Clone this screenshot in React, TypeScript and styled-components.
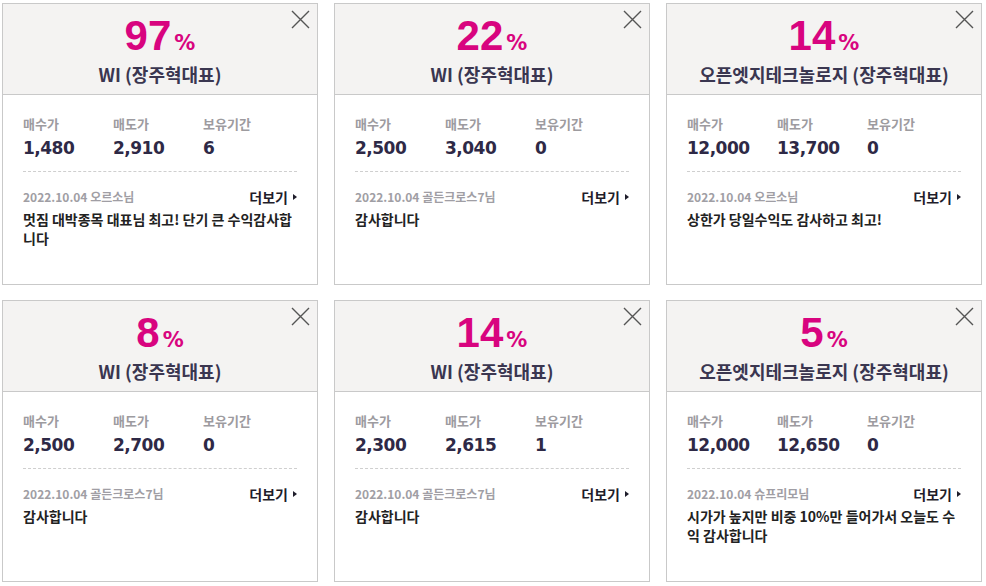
import styled, { createGlobalStyle } from 'styled-components';

const GlobalStyle = createGlobalStyle`
    body {
        margin: 0;
        background: #fff;
        font-family: "Noto Sans CJK KR", "Noto Sans", sans-serif;
    }
`;

const Grid = styled.div`
    display: grid;
    grid-template-columns: repeat(3, 316px);
    column-gap: 16px;
    row-gap: 15px;
    padding: 3px 0 0 2px;
`;

const Card = styled.div`
    position: relative;
    box-sizing: border-box;
    height: 282px;
    border: 1px solid #c9c9c9;
    background: #fff;
`;

const Head = styled.div`
    background: #f4f3f2;
    border-bottom: 1px solid #c9c9c9;
    padding: 11px 0 10px;
    text-align: center;
`;

const Rate = styled.div`
    line-height: 42px;
    height: 42px;
    color: #d8047f;
    font-weight: bold;
`;

const RateNum = styled.span`
    font-family: "Liberation Sans", Arial, sans-serif;
    font-size: 42px;
`;

const RateUnit = styled.span`
    font-family: "DejaVu Sans", sans-serif;
    font-size: 21px;
    margin-left: 3px;
`;

const Title = styled.div`
    margin-top: 7px;
    line-height: 20px;
    font-size: 18px;
    font-weight: bold;
    color: #3a3650;
`;

const Close = styled.button`
    position: absolute;
    top: 6px;
    right: 7px;
    width: 19px;
    height: 19px;
    padding: 0;
    border: 0;
    background: none;
    cursor: pointer;
`;

const Body = styled.div`
    padding: 21px 20px 0;
`;

const Stats = styled.div`
    display: grid;
    grid-template-columns: 90px 90px 1fr;
    row-gap: 5px;
    padding-bottom: 12px;
    border-bottom: 1px dashed #cfcfcf;
`;

const Label = styled.div`
    font-size: 13px;
    line-height: 16px;
    font-weight: bold;
    color: #9d9b9f;
`;

const Value = styled.div`
    font-family: "DejaVu Sans", "Noto Sans CJK KR", sans-serif;
    font-size: 17px;
    letter-spacing: -0.5px;
    line-height: 22px;
    font-weight: bold;
    color: #2e2946;
`;

const Meta = styled.div`
    display: flex;
    justify-content: space-between;
    align-items: center;
    margin-top: 17px;
    line-height: 16px;
`;

const Writer = styled.span`
    font-size: 12px;
    font-weight: bold;
    color: #a09ea4;
`;

const More = styled.a`
    display: flex;
    align-items: center;
    gap: 5px;
    font-size: 14px;
    font-weight: bold;
    color: #1f1d2b;
    text-decoration: none;
    &::after {
        content: "";
        border-left: 4px solid #1f1d2b;
        border-top: 3.5px solid transparent;
        border-bottom: 3.5px solid transparent;
    }
`;

const Comment = styled.p`
    margin: 5px 0 0;
    font-size: 14px;
    line-height: 19px;
    font-weight: bold;
    color: #222;
    word-break: break-all;
`;

type Review = {
    rate: number;
    name: string;
    buy: string;
    sell: string;
    hold: string;
    date: string;
    writer: string;
    text: string;
};

const reviews: Review[] = [
    { rate: 97, name: 'WI (장주혁대표)', buy: '1,480', sell: '2,910', hold: '6', date: '2022.10.04', writer: '오르소님', text: '멋짐 대박종목 대표님 최고! 단기 큰 수익감사합니다' },
    { rate: 22, name: 'WI (장주혁대표)', buy: '2,500', sell: '3,040', hold: '0', date: '2022.10.04', writer: '골든크로스7님', text: '감사합니다' },
    { rate: 14, name: '오픈엣지테크놀로지 (장주혁대표)', buy: '12,000', sell: '13,700', hold: '0', date: '2022.10.04', writer: '오르소님', text: '상한가 당일수익도 감사하고 최고!' },
    { rate: 8, name: 'WI (장주혁대표)', buy: '2,500', sell: '2,700', hold: '0', date: '2022.10.04', writer: '골든크로스7님', text: '감사합니다' },
    { rate: 14, name: 'WI (장주혁대표)', buy: '2,300', sell: '2,615', hold: '1', date: '2022.10.04', writer: '골든크로스7님', text: '감사합니다' },
    { rate: 5, name: '오픈엣지테크놀로지 (장주혁대표)', buy: '12,000', sell: '12,650', hold: '0', date: '2022.10.04', writer: '슈프리모님', text: '시가가 높지만 비중 10%만 들어가서 오늘도 수익 감사합니다' },
];

function CloseIcon() {
    return (
        <svg width="19" height="19" viewBox="0 0 19 19">
            <path d="M1 1L18 18M18 1L1 18" stroke="#555" strokeWidth="1.4" fill="none" />
        </svg>
    );
}

function ReviewCard({ r }: { r: Review }) {
    return (
        <Card>
            <Head>
                <Rate>
                    <RateNum>{r.rate}</RateNum>
                    <RateUnit>%</RateUnit>
                </Rate>
                <Title>{r.name}</Title>
            </Head>
            <Close aria-label="닫기">
                <CloseIcon />
            </Close>
            <Body>
                <Stats>
                    <Label>매수가</Label>
                    <Label>매도가</Label>
                    <Label>보유기간</Label>
                    <Value>{r.buy}</Value>
                    <Value>{r.sell}</Value>
                    <Value>{r.hold}</Value>
                </Stats>
                <Meta>
                    <Writer>{r.date} {r.writer}</Writer>
                    <More href="#">더보기</More>
                </Meta>
                <Comment>{r.text}</Comment>
            </Body>
        </Card>
    );
}

export default function App() {
    return (
        <>
            <GlobalStyle />
            <Grid>
                {reviews.map((r, i) => (
                    <ReviewCard key={i} r={r} />
                ))}
            </Grid>
        </>
    );
}
